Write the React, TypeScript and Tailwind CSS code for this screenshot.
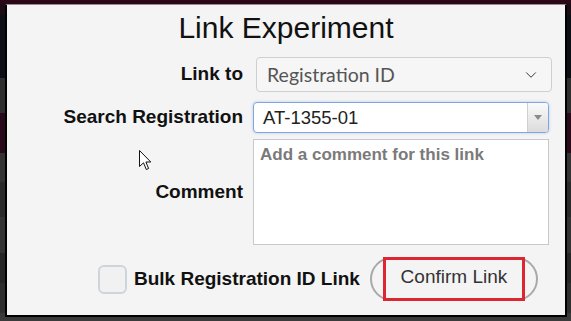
import { ChevronDown } from 'lucide-react';

const stripes = [
    { h: 'h-[4px]', c: 'bg-[#2a0818]' },
    { h: 'h-[11px]', c: 'bg-[#1c0b15]' },
    { h: 'h-[63px]', c: 'bg-[#0b0e14]' },
    { h: 'h-[35px]', c: 'bg-[#2e2e2e]' },
    { h: 'h-[40px]', c: 'bg-[#2a0a1a]' },
    { h: 'h-[29px]', c: 'bg-[#333333]' },
    { h: 'h-[35px]', c: 'bg-[#2a2a2a]' },
    { h: 'h-[36px]', c: 'bg-[#333333]' },
    { h: 'h-[30px]', c: 'bg-[#262626]' },
    { h: 'h-[30px]', c: 'bg-[#2e2e2e]' },
    { h: 'h-[8px]', c: 'bg-[#3a3a3a]' },
];

const label = "w-[236px] text-right font-bold text-[19px] text-[#111] font-['Liberation_Sans',Arial,sans-serif]";

export default function App() {
    return (
        <div className="relative w-[571px] h-[321px] overflow-hidden bg-[#2e2e2e]">
            {/* page behind the modal */}
            <div className="flex flex-col">
                {stripes.map((s, i) => (
                    <div key={i} className={`${s.h} ${s.c}`} />
                ))}
            </div>

            {/* modal */}
            <div className="absolute left-[5px] top-[4px] w-[562px] h-[313px] bg-[#f4f4f4] border-2 border-black border-t border-t-[#9c8a93] flex flex-col">
                <h1 className="pt-[6px] text-center text-[30px] leading-[34px] text-[#111] font-['Liberation_Sans',Arial,sans-serif]">
                    Link Experiment
                </h1>

                <div className="mt-[12px] flex items-center gap-[10px]">
                    <div className={label}>Link to</div>
                    <div className="ml-[3px] w-[296px] h-[35px] rounded-[4px] border border-[#cfcfcf] bg-[#f6f6f6] flex items-center justify-between pl-[10px] pr-[11px]">
                        <span className="text-[19.5px] text-[#555] font-['Lato',sans-serif]">Registration ID</span>
                        <ChevronDown size={18} strokeWidth={1.3} className="text-[#333]" />
                    </div>
                </div>

                <div className="mt-[10px] flex items-center gap-[10px]">
                    <div className={label}>Search Registration</div>
                    <div className="w-[296px] h-[31px] rounded-[4px] border border-[#7fa6df] bg-white flex items-stretch overflow-hidden shadow-[0_0_3px_rgba(102,150,230,0.45)]">
                        <span className="flex-1 flex items-center pl-[9px] text-[18.5px] text-[#222] font-['Liberation_Sans',Arial,sans-serif]">
                            AT-1355-01
                        </span>
                        <span className="w-[21px] border-l border-[#d0d0d0] bg-gradient-to-b from-[#fafafa] to-[#dcdcdc] flex items-center justify-center">
                            <svg width="8" height="5" viewBox="0 0 8 5">
                                <path d="M0 0 L8 0 L4 5 Z" fill="#8a8a8a" />
                            </svg>
                        </span>
                    </div>
                </div>

                <div className="mt-[6px] flex items-center gap-[10px]">
                    <div className={label}>Comment</div>
                    <div className="w-[296px] h-[106px] border border-[#c9c9c9] bg-white pl-[6px] pt-[2px]">
                        <span className="font-bold text-[17px] text-[#7a7a7a] font-['Liberation_Sans',Arial,sans-serif]">
                            Add a comment for this link
                        </span>
                    </div>
                </div>

                <div className="mt-[12px] flex items-center pl-[91px]">
                    <div className="w-[29px] h-[29px] rounded-[6px] border-2 border-[#cdd4dc] bg-[#f1f1f1]" />
                    <span className="ml-[7px] font-bold text-[19px] text-[#111] font-['Liberation_Sans',Arial,sans-serif]">
                        Bulk Registration ID Link
                    </span>
                    <div className="ml-[10px] relative w-[168px] h-[44px] rounded-full border-2 border-[#a9a9a9] flex items-center justify-center">
                        <div className="absolute left-[11px] top-[-2px] w-[142px] h-[44px] border-[3px] border-[#dc2632] bg-[#f4f4f4]" />
                        <span className="relative -mt-[3px] text-[19px] text-[#333] font-['Liberation_Sans',Arial,sans-serif]">
                            Confirm Link
                        </span>
                    </div>
                </div>
            </div>

            {/* mouse pointer */}
            <svg className="absolute left-[139px] top-[150px]" width="13" height="21" viewBox="0 0 13 21">
                <path d="M0.5 0.5 L0.5 16.5 L4.5 12.8 L7.3 19.5 L9.6 18.5 L6.9 12 L11.8 12 Z" fill="white" stroke="#111" strokeWidth="1" strokeLinejoin="round" />
            </svg>
        </div>
    );
}
